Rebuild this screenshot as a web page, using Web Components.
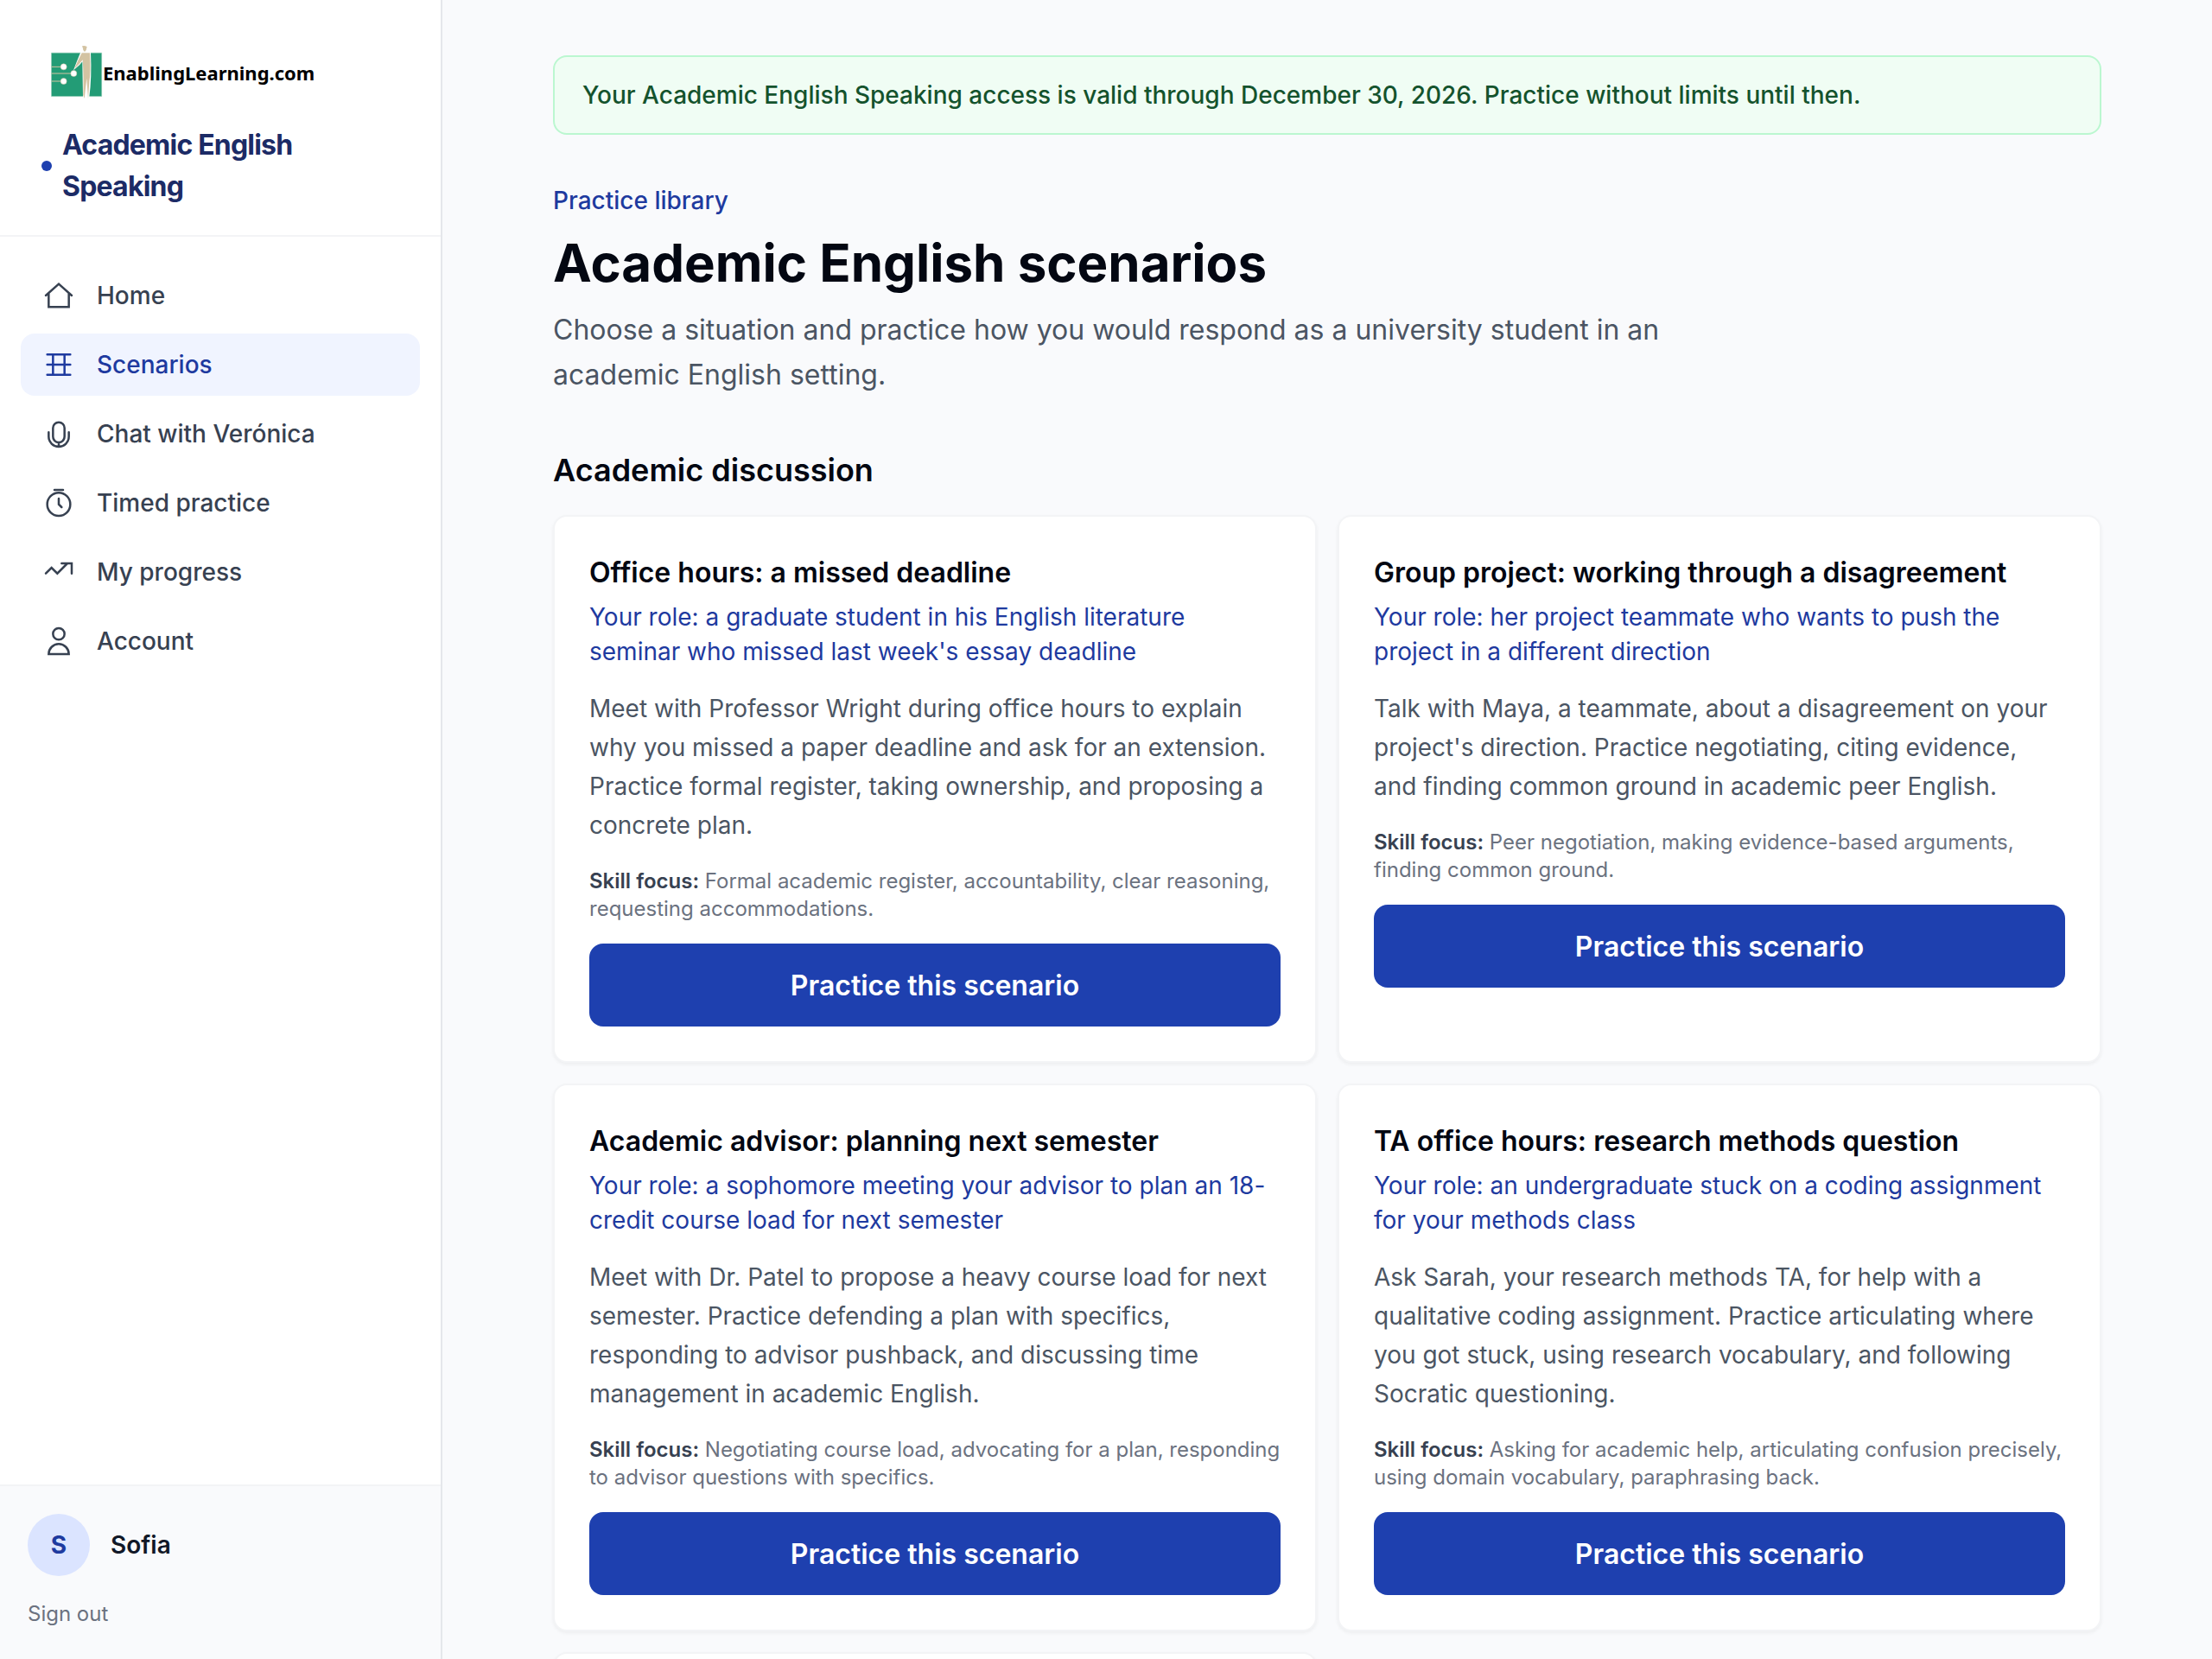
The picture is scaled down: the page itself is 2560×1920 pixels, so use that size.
<!DOCTYPE html>
<html lang="en">
<head>
<meta charset="UTF-8">
<title>Academic English scenarios</title>
<style>
    body {
        margin: 0;
        font-family: Inter, "Liberation Sans", sans-serif;
        color: #030712;
        background: #f9fafc;
    }
</style>
</head>
<body>
<practice-app>
    <app-sidebar slot="sidebar">
        <brand-logo slot="brand" href="#">EnablingLearning.com</brand-logo>
        <span slot="product">Academic English Speaking</span>
        <nav-item icon="home">Home</nav-item>
        <nav-item icon="grid" active>Scenarios</nav-item>
        <nav-item icon="mic">Chat with Verónica</nav-item>
        <nav-item icon="timer">Timed practice</nav-item>
        <nav-item icon="trend">My progress</nav-item>
        <nav-item icon="user">Account</nav-item>
        <user-panel slot="user" initial="S">Sofia</user-panel>
    </app-sidebar>

    <access-notice>Your Academic English Speaking access is valid through December 30, 2026. Practice without limits until then.</access-notice>

    <page-header>
        <span slot="eyebrow">Practice library</span>
        <span slot="title">Academic English scenarios</span>
        Choose a situation and practice how you would respond as a university student in an academic English setting.
    </page-header>

    <scenario-section>
        <span slot="heading">Academic discussion</span>
    </scenario-section>
</practice-app>

<script>
// Attach an open shadow root and fill it
function render(el, html) {
    el.attachShadow({ mode: 'open' }).innerHTML = html;
}

const icons = {
    home: '<path d="M3 12l9-8 9 8M5 10.4V20h14v-9.6"/>',
    grid: '<path d="M4 5h16M4 12h16M4 19h16M8 5v14M16 5v14"/>',
    mic: '<path d="M12 18a4 4 0 0 0 4-4V8a4 4 0 0 0-8 0v6a4 4 0 0 0 4 4zM5 11v3a7 7 0 0 0 14 0v-3M12 18v3"/>',
    timer: '<circle cx="12" cy="13" r="8"/><path d="M12 9v4l2 2M9 3h6"/>',
    trend: '<path d="M3 13l4-4 4 4 7-7M14 6h7v7"/>',
    user: '<circle cx="12" cy="7" r="4"/><path d="M12 14a7 7 0 0 0-7 7h14a7 7 0 0 0-7-7z"/>'
};

const scenarios = [
    {
        title: 'Office hours: a missed deadline',
        role: "a graduate student in his English literature seminar who missed last week's essay deadline",
        text: 'Meet with Professor Wright during office hours to explain why you missed a paper deadline and ask for an extension. Practice formal register, taking ownership, and proposing a concrete plan.',
        skills: 'Formal academic register, accountability, clear reasoning, requesting accommodations.'
    },
    {
        title: 'Group project: working through a disagreement',
        role: 'her project teammate who wants to push the project in a different direction',
        text: "Talk with Maya, a teammate, about a disagreement on your project's direction. Practice negotiating, citing evidence, and finding common ground in academic peer English.",
        skills: 'Peer negotiation, making evidence-based arguments, finding common ground.'
    },
    {
        title: 'Academic advisor: planning next semester',
        role: 'a sophomore meeting your advisor to plan an 18-credit course load for next semester',
        text: 'Meet with Dr. Patel to propose a heavy course load for next semester. Practice defending a plan with specifics, responding to advisor pushback, and discussing time management in academic English.',
        skills: 'Negotiating course load, advocating for a plan, responding to advisor questions with specifics.'
    },
    {
        title: 'TA office hours: research methods question',
        role: 'an undergraduate stuck on a coding assignment for your methods class',
        text: 'Ask Sarah, your research methods TA, for help with a qualitative coding assignment. Practice articulating where you got stuck, using research vocabulary, and following Socratic questioning.',
        skills: 'Asking for academic help, articulating confusion precisely, using domain vocabulary, paraphrasing back.'
    }
];

// Page shell: fixed-width sidebar, fluid main column
class PracticeApp extends HTMLElement {
    constructor() {
        super();
        render(this, `
            <style>
                :host {
                    display: grid;
                    grid-template-columns: 512px minmax(0, 1fr);
                    height: 100vh;
                    overflow: hidden;
                }
                main {
                    min-height: 0;
                    padding: 64px 128px;
                    overflow: hidden;
                }
            </style>
            <slot name="sidebar"></slot>
            <main><slot></slot></main>
        `);
    }
}

class AppSidebar extends HTMLElement {
    constructor() {
        super();
        render(this, `
            <style>
                :host {
                    display: flex;
                    flex-direction: column;
                    box-sizing: border-box;
                    background: #fff;
                    border-right: 2px solid #e5e7eb;
                }
                header {
                    display: flex;
                    flex-direction: column;
                    gap: 24px;
                    padding: 48px 48px 32px;
                    border-bottom: 2px solid #f3f4f6;
                }
                .product {
                    display: flex;
                    align-items: center;
                    gap: 12px;
                    font-size: 32px;
                    line-height: 48px;
                    font-weight: 700;
                    letter-spacing: -0.025em;
                    color: #1c2b66;
                }
                .product::before {
                    content: "";
                    flex: none;
                    width: 12px;
                    height: 12px;
                    border-radius: 50%;
                    background: #1e40af;
                }
                nav {
                    flex: 1;
                    display: flex;
                    flex-direction: column;
                    gap: 8px;
                    padding: 32px 24px;
                }
            </style>
            <header>
                <slot name="brand"></slot>
                <div class="product"><slot name="product"></slot></div>
            </header>
            <nav><slot></slot></nav>
            <slot name="user"></slot>
        `);
    }
}

class BrandLogo extends HTMLElement {
    constructor() {
        super();
        render(this, `
            <style>
                :host { display: block; }
                a {
                    display: flex;
                    align-items: center;
                    height: 72px;
                    padding-left: 11px;
                    color: #000;
                    font: 700 22px/32px "Noto Sans", "DejaVu Sans", sans-serif;
                    text-decoration: none;
                }
                svg { width: 60px; height: 64px; flex: none; }
            </style>
            <a href="${this.getAttribute('href') || '#'}">
                <svg viewBox="57 36 180 192" aria-hidden="true">
                    <path fill="#239c76" stroke="#8fc9b3" stroke-width="1.5" d="M58.5 63.5H233V214.500H58.5z"/>
                    <path stroke="#d3c3a2" stroke-width="3" d="M59 112h34M59 135h68M59 162h34"/>
                    <g fill="#fff" stroke="#d3c3a2" stroke-width="1.5">
                        <circle cx="101" cy="112" r="10.5"/>
                        <circle cx="136" cy="135" r="10.5"/>
                        <circle cx="101" cy="162" r="10.5"/>
                    </g>
                    <path fill="#fff" d="M160 61h35q4 90-5 155h-22q-1-60-2-122l-10 12-21 18q12-32 25-63z"/>
                    <path fill="#d3c3a2" d="M164 64h28q4 66-2 100l-4 59-5-71-8 70-4-12q2-70-2-122-10 14-29 31 12-28 26-55zM165 40q8-3 17 2-1 12-8 18-7-4-6-12z"/>
                </svg>
                <slot></slot>
            </a>
        `);
    }
}

class NavItem extends HTMLElement {
    constructor() {
        super();
        render(this, `
            <style>
                :host { display: block; }
                a {
                    display: flex;
                    align-items: center;
                    gap: 24px;
                    padding: 16px 24px;
                    border-radius: 16px;
                    color: #374151;
                    font-size: 28px;
                    line-height: 40px;
                    font-weight: 500;
                    text-decoration: none;
                }
                :host([active]) a {
                    color: #1e3a9f;
                    background: #f0f4ff;
                }
                svg {
                    width: 40px;
                    height: 40px;
                    fill: none;
                    stroke: currentColor;
                    stroke-width: 1.5;
                    stroke-linecap: round;
                }
            </style>
            <a href="#" ${this.hasAttribute('active') ? 'aria-current="page"' : ''}>
                <svg viewBox="0 0 24 24" aria-hidden="true">${icons[this.getAttribute('icon')]}</svg>
                <slot></slot>
            </a>
        `);
    }
}

class UserPanel extends HTMLElement {
    constructor() {
        super();
        render(this, `
            <style>
                :host {
                    display: flex;
                    flex-direction: column;
                    align-items: flex-start;
                    gap: 24px;
                    padding: 32px;
                    background: #f9fafc;
                    border-top: 2px solid #f3f4f6;
                }
                .user {
                    display: flex;
                    align-items: center;
                    gap: 24px;
                    font-size: 28px;
                    line-height: 40px;
                    font-weight: 600;
                    color: #111827;
                }
                .avatar {
                    display: grid;
                    place-items: center;
                    width: 72px;
                    height: 72px;
                    border-radius: 50%;
                    background: #dbe4ff;
                    color: #1e3a9f;
                    font-weight: 700;
                }
                button {
                    padding: 0;
                    border: 0;
                    background: none;
                    color: #6b7280;
                    font: inherit;
                    font-size: 24px;
                    line-height: 40px;
                    cursor: pointer;
                }
            </style>
            <div class="user">
                <span class="avatar">${this.getAttribute('initial')}</span>
                <slot></slot>
            </div>
            <button type="button">Sign out</button>
        `);
    }
}

class AccessNotice extends HTMLElement {
    constructor() {
        super();
        render(this, `
            <style>
                :host {
                    display: block;
                    padding: 24px 32px;
                    border: 2px solid #bbf7d0;
                    border-radius: 16px;
                    background: #f0fdf4;
                    color: #14532d;
                    font-size: 28px;
                    line-height: 40px;
                    font-weight: 500;
                }
            </style>
            <slot></slot>
        `);
    }
}

class PageHeader extends HTMLElement {
    constructor() {
        super();
        render(this, `
            <style>
                :host {
                    display: flex;
                    flex-direction: column;
                    gap: 16px;
                    margin: 56px 0;
                }
                p, h1 { margin: 0; }
                .eyebrow {
                    color: #1e3a9f;
                    font-size: 28px;
                    line-height: 40px;
                    font-weight: 500;
                }
                h1 {
                    font-size: 60px;
                    line-height: 72px;
                    font-weight: 700;
                }
                .lead {
                    max-width: 1344px;
                    color: #4b5563;
                    font-size: 32px;
                    line-height: 52px;
                }
            </style>
            <p class="eyebrow"><slot name="eyebrow"></slot></p>
            <h1><slot name="title"></slot></h1>
            <p class="lead"><slot></slot></p>
        `);
    }
}

class ScenarioSection extends HTMLElement {
    constructor() {
        super();
        render(this, `
            <style>
                :host { display: block; }
                h2 {
                    margin: 0 0 24px;
                    font-size: 36px;
                    line-height: 56px;
                    font-weight: 600;
                }
                .grid {
                    display: grid;
                    grid-template-columns: repeat(2, minmax(0, 1fr));
                    gap: 24px;
                }
            </style>
            <h2><slot name="heading"></slot></h2>
            <div class="grid">
                ${scenarios.map(s => `
                    <scenario-card>
                        <span slot="title">${s.title}</span>
                        <span slot="role">Your role: ${s.role}</span>
                        ${s.text}
                        <span slot="skills">${s.skills}</span>
                    </scenario-card>
                `).join('')}
                <card-frame></card-frame>
            </div>
        `);
    }
}

// White box shared by all cards
class CardFrame extends HTMLElement {
    constructor() {
        super();
        render(this, `
            <style>
                :host {
                    display: block;
                    box-sizing: border-box;
                    height: 100%;
                    min-height: 120px;
                    padding: 40px;
                    background: #fff;
                    border: 2px solid #f3f4f6;
                    border-radius: 16px;
                    box-shadow: 0 2px 4px rgba(0, 0, 0, 0.05);
                }
            </style>
            <slot></slot>
        `);
    }
}

class ScenarioCard extends HTMLElement {
    constructor() {
        super();
        render(this, `
            <style>
                :host { display: block; }
                h3, p { margin: 0; }
                h3 {
                    font-size: 32px;
                    line-height: 50px;
                    font-weight: 600;
                }
                .role {
                    margin-top: 6px;
                    color: #1e3a9f;
                    font-size: 28px;
                    line-height: 40px;
                }
                .text {
                    margin: 24px 0 26px;
                    color: #4b5563;
                    font-size: 28px;
                    line-height: 45px;
                }
                .skills {
                    color: #6b7280;
                    font-size: 24px;
                    line-height: 32px;
                }
                .skills strong {
                    color: #374151;
                    font-weight: 600;
                }
                button {
                    width: 100%;
                    margin-top: 24px;
                    padding: 24px 24px 22px;
                    border: 0;
                    border-radius: 16px;
                    background: #1e40af;
                    color: #fff;
                    font: inherit;
                    font-size: 32px;
                    line-height: 50px;
                    font-weight: 600;
                    cursor: pointer;
                }
                button:hover { background: #1e3a9f; }
            </style>
            <card-frame>
                <h3><slot name="title"></slot></h3>
                <p class="role"><slot name="role"></slot></p>
                <p class="text"><slot></slot></p>
                <p class="skills"><strong>Skill focus:</strong> <slot name="skills"></slot></p>
                <button type="button">Practice this scenario</button>
            </card-frame>
        `);
    }
}

customElements.define('card-frame', CardFrame);
customElements.define('scenario-card', ScenarioCard);
customElements.define('scenario-section', ScenarioSection);
customElements.define('page-header', PageHeader);
customElements.define('access-notice', AccessNotice);
customElements.define('user-panel', UserPanel);
customElements.define('nav-item', NavItem);
customElements.define('brand-logo', BrandLogo);
customElements.define('app-sidebar', AppSidebar);
customElements.define('practice-app', PracticeApp);
</script>
</body>
</html>
